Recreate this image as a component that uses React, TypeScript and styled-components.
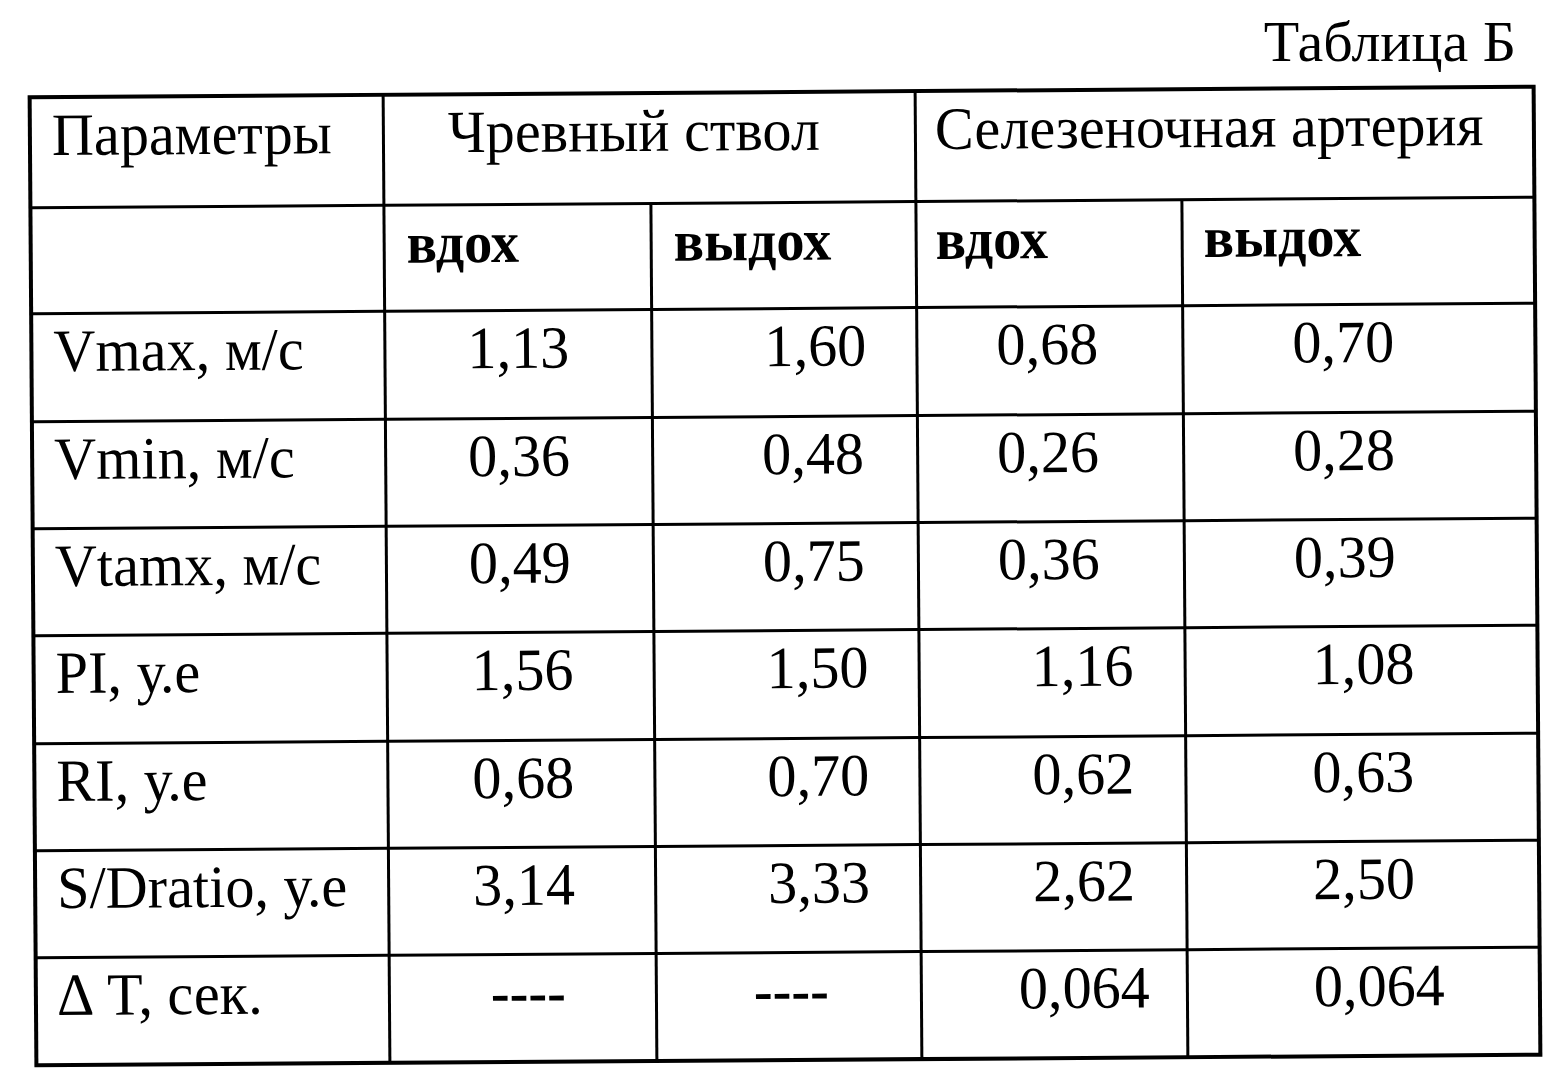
import React from "react";
import styled, { createGlobalStyle } from "styled-components";

const GlobalStyle = createGlobalStyle`
  html, body {
    margin: 0;
    padding: 0;
    background: #ffffff;
  }
  body {
    font-family: "Liberation Serif", "Times New Roman", serif;
    color: #000000;
  }
`;

const Page = styled.div`
  width: 1563px;
  height: 1087px;
  overflow: hidden;
  padding-top: 13px;
  box-sizing: border-box;
`;

const Caption = styled.div`
  font-size: 58px;
  line-height: 58px;
  text-align: right;
  padding-right: 47px;
  height: 58px;
`;

const TableArea = styled.div`
  margin-top: 19px;
  margin-left: 31px;
  width: 1508px;
`;

const Grid = styled.div`
  display: grid;
  grid-template-columns: 350px 264px 262px 263px 349px;
  grid-template-rows: 107px 103px 105px 104px 104px 105px 104px 104px 104px;
  gap: 3px;
  padding: 4px;
  background: #000000;
  transform: rotate(-0.4deg);
  transform-origin: center center;
`;

const Cell = styled.div<{ $indent: number; $span?: number; $bold?: boolean }>`
  background: #ffffff;
  grid-column: span ${(p) => p.$span ?? 1};
  padding-top: ${(p) => (p.$bold ? 8 : 6)}px;
  padding-left: ${(p) => p.$indent}px;
  font-size: ${(p) => (p.$bold ? 58 : 60)}px;
  line-height: ${(p) => (p.$bold ? 58 : 60)}px;
  font-weight: ${(p) => (p.$bold ? 700 : 400)};
  white-space: nowrap;
  overflow: hidden;
`;

const Text = styled.span`
  display: inline-block;
  transform: scaleX(0.97);
  transform-origin: left center;
`;

type Row = { label: string; values: [string, number][] };

const rows: Row[] = [
  { label: "Vmax, м/с", values: [["1,13", 81], ["1,60", 111], ["0,68", 78], ["0,70", 108]] },
  { label: "Vmin, м/с", values: [["0,36", 81], ["0,48", 108], ["0,26", 78], ["0,28", 108]] },
  { label: "Vtamx, м/с", values: [["0,49", 81], ["0,75", 108], ["0,36", 78], ["0,39", 108]] },
  { label: "PI, у.е", values: [["1,56", 83], ["1,50", 111], ["1,16", 111], ["1,08", 126]] },
  { label: "RI, у.е", values: [["0,68", 83], ["0,70", 111], ["0,62", 111], ["0,63", 125]] },
  { label: "S/Dratio, у.е", values: [["3,14", 83], ["3,33", 111], ["2,62", 111], ["2,50", 125]] },
  { label: "∆ T, сек.", values: [["----", 100], ["----", 96], ["0,064", 96], ["0,064", 125]] },
];

export default function App() {
  return (
    <>
      <GlobalStyle />
      <Page>
        <Caption>Таблица Б</Caption>
        <TableArea>
          <Grid>
            <Cell $indent={20}>
              <Text>Параметры</Text>
            </Cell>
            <Cell $indent={63} $span={2}>
              <Text>Чревный ствол</Text>
            </Cell>
            <Cell $indent={18} $span={2}>
              <Text>Селезеночная артерия</Text>
            </Cell>

            <Cell $indent={20} />
            <Cell $indent={21} $bold>
              <Text>вдох</Text>
            </Cell>
            <Cell $indent={21} $bold>
              <Text>выдох</Text>
            </Cell>
            <Cell $indent={18} $bold>
              <Text>вдох</Text>
            </Cell>
            <Cell $indent={20} $bold>
              <Text>выдох</Text>
            </Cell>

            {rows.map((r) => (
              <React.Fragment key={r.label}>
                <Cell $indent={20}>
                  <Text>{r.label}</Text>
                </Cell>
                {r.values.map(([v, indent], i) => (
                  <Cell key={i} $indent={indent} $bold={v === "----"}>
                    <Text>{v}</Text>
                  </Cell>
                ))}
              </React.Fragment>
            ))}
          </Grid>
        </TableArea>
      </Page>
    </>
  );
}
